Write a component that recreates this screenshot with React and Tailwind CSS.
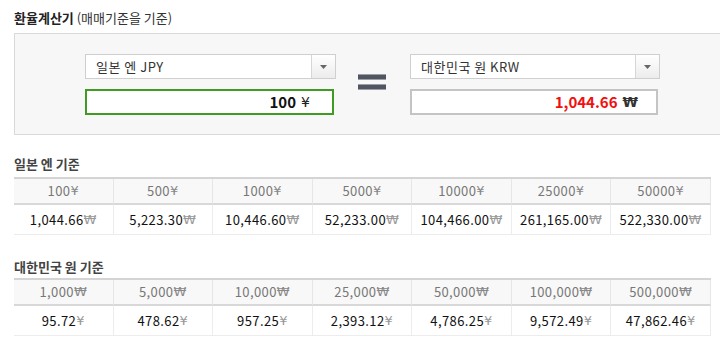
import React from "react";

const jpy = [
  ["100", "1,044.66"],
  ["500", "5,223.30"],
  ["1000", "10,446.60"],
  ["5000", "52,233.00"],
  ["10000", "104,466.00"],
  ["25000", "261,165.00"],
  ["50000", "522,330.00"],
];
const krw = [
  ["1,000", "95.72"],
  ["5,000", "478.62"],
  ["10,000", "957.25"],
  ["25,000", "2,393.12"],
  ["50,000", "4,786.25"],
  ["100,000", "9,572.49"],
  ["500,000", "47,862.46"],
];

const sym = { fontFamily: '"DejaVu Sans", sans-serif' };

function Arrow() {
  return (
    <div className="w-[24px] h-full border-l border-[#d6d6d6] bg-gradient-to-b from-[#ffffff] to-[#ececec] flex items-center justify-center">
      <svg width="7" height="4" viewBox="0 0 7 4">
        <path d="M0 0 L7 0 L3.5 4 Z" fill="#666" />
      </svg>
    </div>
  );
}

function Select({ label, w }) {
  return (
    <div className={`${w} h-[25px] bg-white border border-[#cfcfcf] flex items-stretch`}>
      <div className="flex-1 flex items-center pl-[10px] text-[13px] text-[#333] tracking-[0.5px]">{label}</div>
      <Arrow />
    </div>
  );
}

function Table({ rows, hs, bs }) {
  return (
    <div className="w-[697px] grid grid-cols-7 border-t-2 border-[#d4d4d4] border-b border-b-[#ececec]">
      {rows.map(([h]) => (
        <div key={"h" + h} className="h-[26px] bg-[#f8f8f8] border-r border-r-[#e6e6e6] border-b-2 border-b-[#d8d8d8] flex items-center justify-center text-[13px] text-[#777] tracking-[0.4px]">
          <span>{h}</span>
          <span className="text-[#888] text-[13px]" style={sym}>{hs}</span>
        </div>
      ))}
      {rows.map(([h, b]) => (
        <div key={"b" + h} className="h-[29px] bg-white border-r border-r-[#ececec] flex items-center justify-center text-[13px] text-[#111] tracking-[0.4px]">
          <span>{b}</span>
          <span className="text-[#999] text-[13px]" style={sym}>{bs}</span>
        </div>
      ))}
    </div>
  );
}

export default function App() {
  return (
    <div
      className="w-[720px] h-[353px] overflow-hidden bg-white"
      style={{ fontFamily: '"Noto Sans CJK KR", "Noto Sans", sans-serif' }}
    >
      <div className="pt-[10px] pl-[14px] text-[13px] leading-[16px] text-[#222]">
        <span className="font-bold">환율계산기</span>
        <span className="text-[#333]"> (매매기준을 기준)</span>
      </div>
      <div className="ml-[14px] mt-[7px] w-[720px] h-[102px] bg-[#f7f7f7] border border-[#d9d9d9] flex items-start pl-[70px] pt-[20px]">
        <div className="flex flex-col gap-[10px]">
          <Select label="일본 엔 JPY" w="w-[251px]" />
          <div className="w-[249px] h-[26px] bg-white border-2 border-[#3f9b22] flex items-center justify-end pr-[22px]">
            <span className="text-[15px] font-bold text-[#111]">100</span>
            <span className="text-[14px] text-[#222] ml-[5px]" style={sym}>¥</span>
          </div>
        </div>
        <div className="ml-[22px] mt-[20px] w-[28px] flex flex-col gap-[4px]">
          <div className="h-[6px] bg-[#50555f] border-y border-[#9a9ea6]" />
          <div className="h-[6px] bg-[#50555f] border-y border-[#9a9ea6]" />
        </div>
        <div className="ml-[24px] flex flex-col gap-[10px]">
          <Select label="대한민국 원 KRW" w="w-[250px]" />
          <div className="w-[248px] h-[26px] bg-white border-2 border-[#c4c4c4] flex items-center justify-end pr-[18px]">
            <span className="text-[15px] font-bold text-[#f01010]">1,044.66</span>
            <span className="text-[14px] font-bold text-[#333] ml-[5px]" style={sym}>₩</span>
          </div>
        </div>
      </div>
      <div className="mt-[21px] pl-[14px]">
        <div className="text-[13px] leading-[16px] font-bold text-[#444] mb-[5px]">일본 엔 기준</div>
        <Table rows={jpy} hs="¥" bs="₩" />
      </div>
      <div className="mt-[24px] pl-[14px]">
        <div className="text-[13px] leading-[16px] font-bold text-[#444] mb-[3px]">대한민국 원 기준</div>
        <Table rows={krw} hs="₩" bs="¥" />
      </div>
    </div>
  );
}
